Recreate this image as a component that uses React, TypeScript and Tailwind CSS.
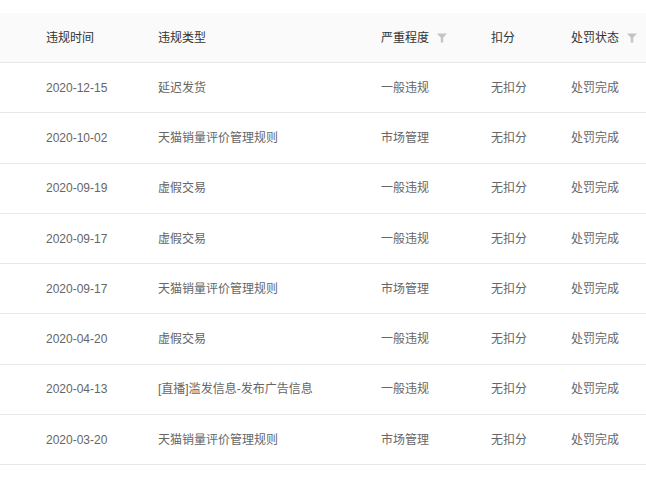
const rows = [
  { date: '2020-12-15', type: '延迟发货', level: '一般违规' },
  { date: '2020-10-02', type: '天猫销量评价管理规则', level: '市场管理' },
  { date: '2020-09-19', type: '虚假交易', level: '一般违规' },
  { date: '2020-09-17', type: '虚假交易', level: '一般违规' },
  { date: '2020-09-17', type: '天猫销量评价管理规则', level: '市场管理' },
  { date: '2020-04-20', type: '虚假交易', level: '一般违规' },
  { date: '2020-04-13', type: '[直播]滥发信息-发布广告信息', level: '一般违规' },
  { date: '2020-03-20', type: '天猫销量评价管理规则', level: '市场管理' },
];

function Funnel() {
  return (
    <svg width="10" height="10" viewBox="0 0 10 10" className="ml-[8px] shrink-0">
      <path d="M0 0.5h10L6.2 4.8V9.5H3.8V4.8z" fill="#c4c4c4" />
    </svg>
  );
}

export default function App() {
  return (
    <div
      className="w-[646px] h-[478px] bg-white overflow-hidden pt-[13px] text-[12px]"
      style={{ fontFamily: '"Liberation Sans", "Noto Sans CJK SC", sans-serif' }}
    >
      {/* Header */}
      <div className="flex items-center h-[50px] bg-[#fafafa] border-b border-[#e8e8e8] text-[#333]">
        <div className="w-[158px] pl-[46px]">违规时间</div>
        <div className="w-[223px]">违规类型</div>
        <div className="w-[110px] flex items-center">严重程度<Funnel /></div>
        <div className="w-[80px]">扣分</div>
        <div className="flex-1 flex items-center">处罚状态<Funnel /></div>
      </div>

      {/* Rows */}
      {rows.map((r, i) => (
        <div key={i} className="flex items-center h-[50.3px] border-b border-[#e8e8e8] text-[#666]">
          <div className="w-[158px] pl-[46px]">{r.date}</div>
          <div className="w-[223px]">{r.type}</div>
          <div className="w-[110px]">{r.level}</div>
          <div className="w-[80px]">无扣分</div>
          <div className="flex-1">处罚完成</div>
        </div>
      ))}
    </div>
  );
}
